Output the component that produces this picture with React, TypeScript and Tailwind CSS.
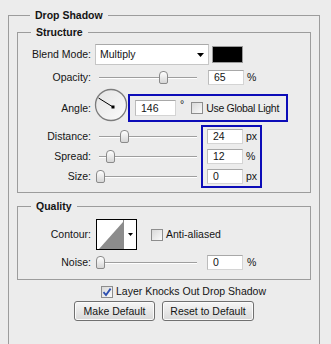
import React from 'react';

const SANS = "font-['Liberation_Sans',Arial,sans-serif]";

function Slider({ pos }: { pos: number }) {
  return (
    <div className="relative h-[15px] w-[109px] shrink-0">
      <div className="absolute left-[7px] top-[7px] h-[2px] w-[98px] border-t border-b border-t-[#9e9e9e] border-b-white" />
      <div
        className="absolute top-[1px] h-[13px] w-[9px] rounded-t-[4px] rounded-b-[2px] border border-[#8a8a8a] bg-gradient-to-b from-white to-[#d6d6d6]"
        style={{ left: pos }}
      />
    </div>
  );
}

function Field({ value, w = 'w-[36px]', h = 'h-[15px]' }: { value: string; w?: string; h?: string }) {
  return (
    <div className={`${w} ${h} shrink-0 bg-white border border-[#d4d4d4] border-t-[#a8a8a8] border-l-[#bcbcbc] pl-[5px] flex items-center`}>
      {value}
    </div>
  );
}

function Check({ checked = false }: { checked?: boolean }) {
  return (
    <div className="relative h-[12px] w-[12px] shrink-0 border border-[#8d8d8d] bg-gradient-to-br from-[#d9d9d9] to-[#fafafa]">
      {checked && (
        <svg viewBox="0 0 10 10" className="absolute inset-0 h-[10px] w-[10px]">
          <path d="M1.5 5.2 L4 8 L8.6 1.6" fill="none" stroke="#2d4fb0" strokeWidth="1.8" />
        </svg>
      )}
    </div>
  );
}

function Label({ children }: { children: React.ReactNode }) {
  return <div className="w-[74px] shrink-0 text-right pr-[1px]">{children}</div>;
}

function Button({ children, w }: { children: React.ReactNode; w: string }) {
  return (
    <button className={`${w} h-[20px] rounded-[3px] border border-[#707070] bg-gradient-to-b from-[#f6f6f6] to-[#d9d9d9] text-center leading-[18px] shadow-[inset_0_0_0_1px_#fbfbfb]`}>
      {children}
    </button>
  );
}

export default function App() {
  return (
    <div className={`h-[344px] w-[331px] overflow-hidden bg-[#ececec] text-[10.5px] leading-[13px] text-[#141414] ${SANS}`}>
      <fieldset className="ml-[8px] mt-[9px] w-[312px] border border-[#9c9c9c] px-[8px] pb-[40px]">
        <legend className="ml-[13px] px-[5px] font-bold leading-[13px]">Drop Shadow</legend>

        {/* Structure */}
        <fieldset className="mt-[4px] border border-[#9c9c9c] pb-[4px]">
          <legend className="ml-[13px] px-[5px] font-bold leading-[13px]">Structure</legend>

          <div className="mt-[5px] flex h-[21px] items-center">
            <Label>Blend Mode:</Label>
            <div className="ml-[3px] flex h-[21px] w-[114px] items-center justify-between border border-[#c6c6c6] border-t-[#a9a9a9] bg-white pl-[4px] pr-[4px]">
              <span>Multiply</span>
              <svg width="7" height="4" viewBox="0 0 7 4"><path d="M0 0 H7 L3.5 4 Z" fill="#000" /></svg>
            </div>
            <div className="ml-[3px] h-[17px] w-[31px] border border-[#9a9a9a] bg-black" />
          </div>

          <div className="mt-[5px] flex h-[15px] items-center">
            <Label>Opacity:</Label>
            <Slider pos={67} />
            <div className="ml-[7px]"><Field value="65" /></div>
            <span className="ml-[3px]">%</span>
          </div>

          <div className="mt-[3px] flex h-[34px] items-end">
            <div className="flex h-[28px] items-center">
              <Label>Angle:</Label>
            </div>
            <svg width="34" height="34" viewBox="0 0 34 34" className="ml-[2px] shrink-0">
              <defs>
                <linearGradient id="dial" x1="0" y1="0" x2="1" y2="1">
                  <stop offset="0" stopColor="#e4e4e4" />
                  <stop offset="1" stopColor="#fbfbfb" />
                </linearGradient>
              </defs>
              <circle cx="17" cy="17" r="15.5" fill="url(#dial)" stroke="#7c7c7c" strokeWidth="1.3" />
              <line x1="19" y1="19" x2="4.5" y2="10" stroke="#000" strokeWidth="1" />
              <rect x="17.5" y="17.5" width="3" height="3" fill="#000" />
            </svg>
            <div className="flex h-[28px] w-[160px] items-center whitespace-nowrap border-2 border-[#0c0cb8] pl-[5px]">
              <Field value="146" w="w-[41px]" h="h-[16px]" />
              <span className="ml-[4px] self-start mt-[2px]">°</span>
              <div className="ml-[7px]"><Check /></div>
              <span className="ml-[3px] tracking-[-0.3px]">Use Global Light</span>
            </div>
          </div>

          <div className="mt-[3px] flex">
            <div className="flex w-[183px] flex-col gap-[5px] pt-[4px]">
              <div className="flex h-[15px] items-center"><Label>Distance:</Label><Slider pos={28} /></div>
              <div className="flex h-[15px] items-center"><Label>Spread:</Label><Slider pos={14} /></div>
              <div className="flex h-[15px] items-center"><Label>Size:</Label><Slider pos={4} /></div>
            </div>
            <div className="flex w-[61px] flex-col gap-[5px] border-2 border-[#0c0cb8] pb-[2px] pl-[4px] pt-[2px]">
              <div className="flex h-[15px] items-center"><Field value="24" /><span className="ml-[3px]">px</span></div>
              <div className="flex h-[15px] items-center"><Field value="12" /><span className="ml-[3px]">%</span></div>
              <div className="flex h-[15px] items-center"><Field value="0" /><span className="ml-[3px]">px</span></div>
            </div>
          </div>
        </fieldset>

        {/* Quality */}
        <fieldset className="mt-[7px] border border-[#9c9c9c] pb-[9px]">
          <legend className="ml-[13px] px-[5px] font-bold leading-[13px]">Quality</legend>

          <div className="mt-[6px] flex h-[31px] items-center">
            <Label>Contour:</Label>
            <div className="ml-[4px] flex h-[31px] w-[41px] border border-black bg-white">
              <svg width="26" height="29" viewBox="0 0 26 29" className="shrink-0">
                <path d="M2 29 L26 2 L26 29 Z" fill="#8c8c8c" />
              </svg>
              <div className="flex flex-1 items-center justify-center border-l border-[#8c8c8c]">
                <svg width="5" height="3" viewBox="0 0 5 3"><path d="M0 0 H5 L2.5 3 Z" fill="#000" /></svg>
              </div>
            </div>
            <div className="ml-[14px]"><Check /></div>
            <span className="ml-[3px]">Anti-aliased</span>
          </div>

          <div className="mt-[5px] flex h-[15px] items-center">
            <Label>Noise:</Label>
            <Slider pos={4} />
            <div className="ml-[6px]"><Field value="0" /></div>
            <span className="ml-[4px]">%</span>
          </div>
        </fieldset>

        <div className="ml-[84px] mt-[5px] flex h-[13px] items-center">
          <Check checked />
          <span className="ml-[3px]">Layer Knocks Out Drop Shadow</span>
        </div>

        <div className="mt-[3px] flex justify-center gap-[7px]">
          <Button w="w-[81px]">Make Default</Button>
          <Button w="w-[92px]">Reset to Default</Button>
        </div>
      </fieldset>
    </div>
  );
}
